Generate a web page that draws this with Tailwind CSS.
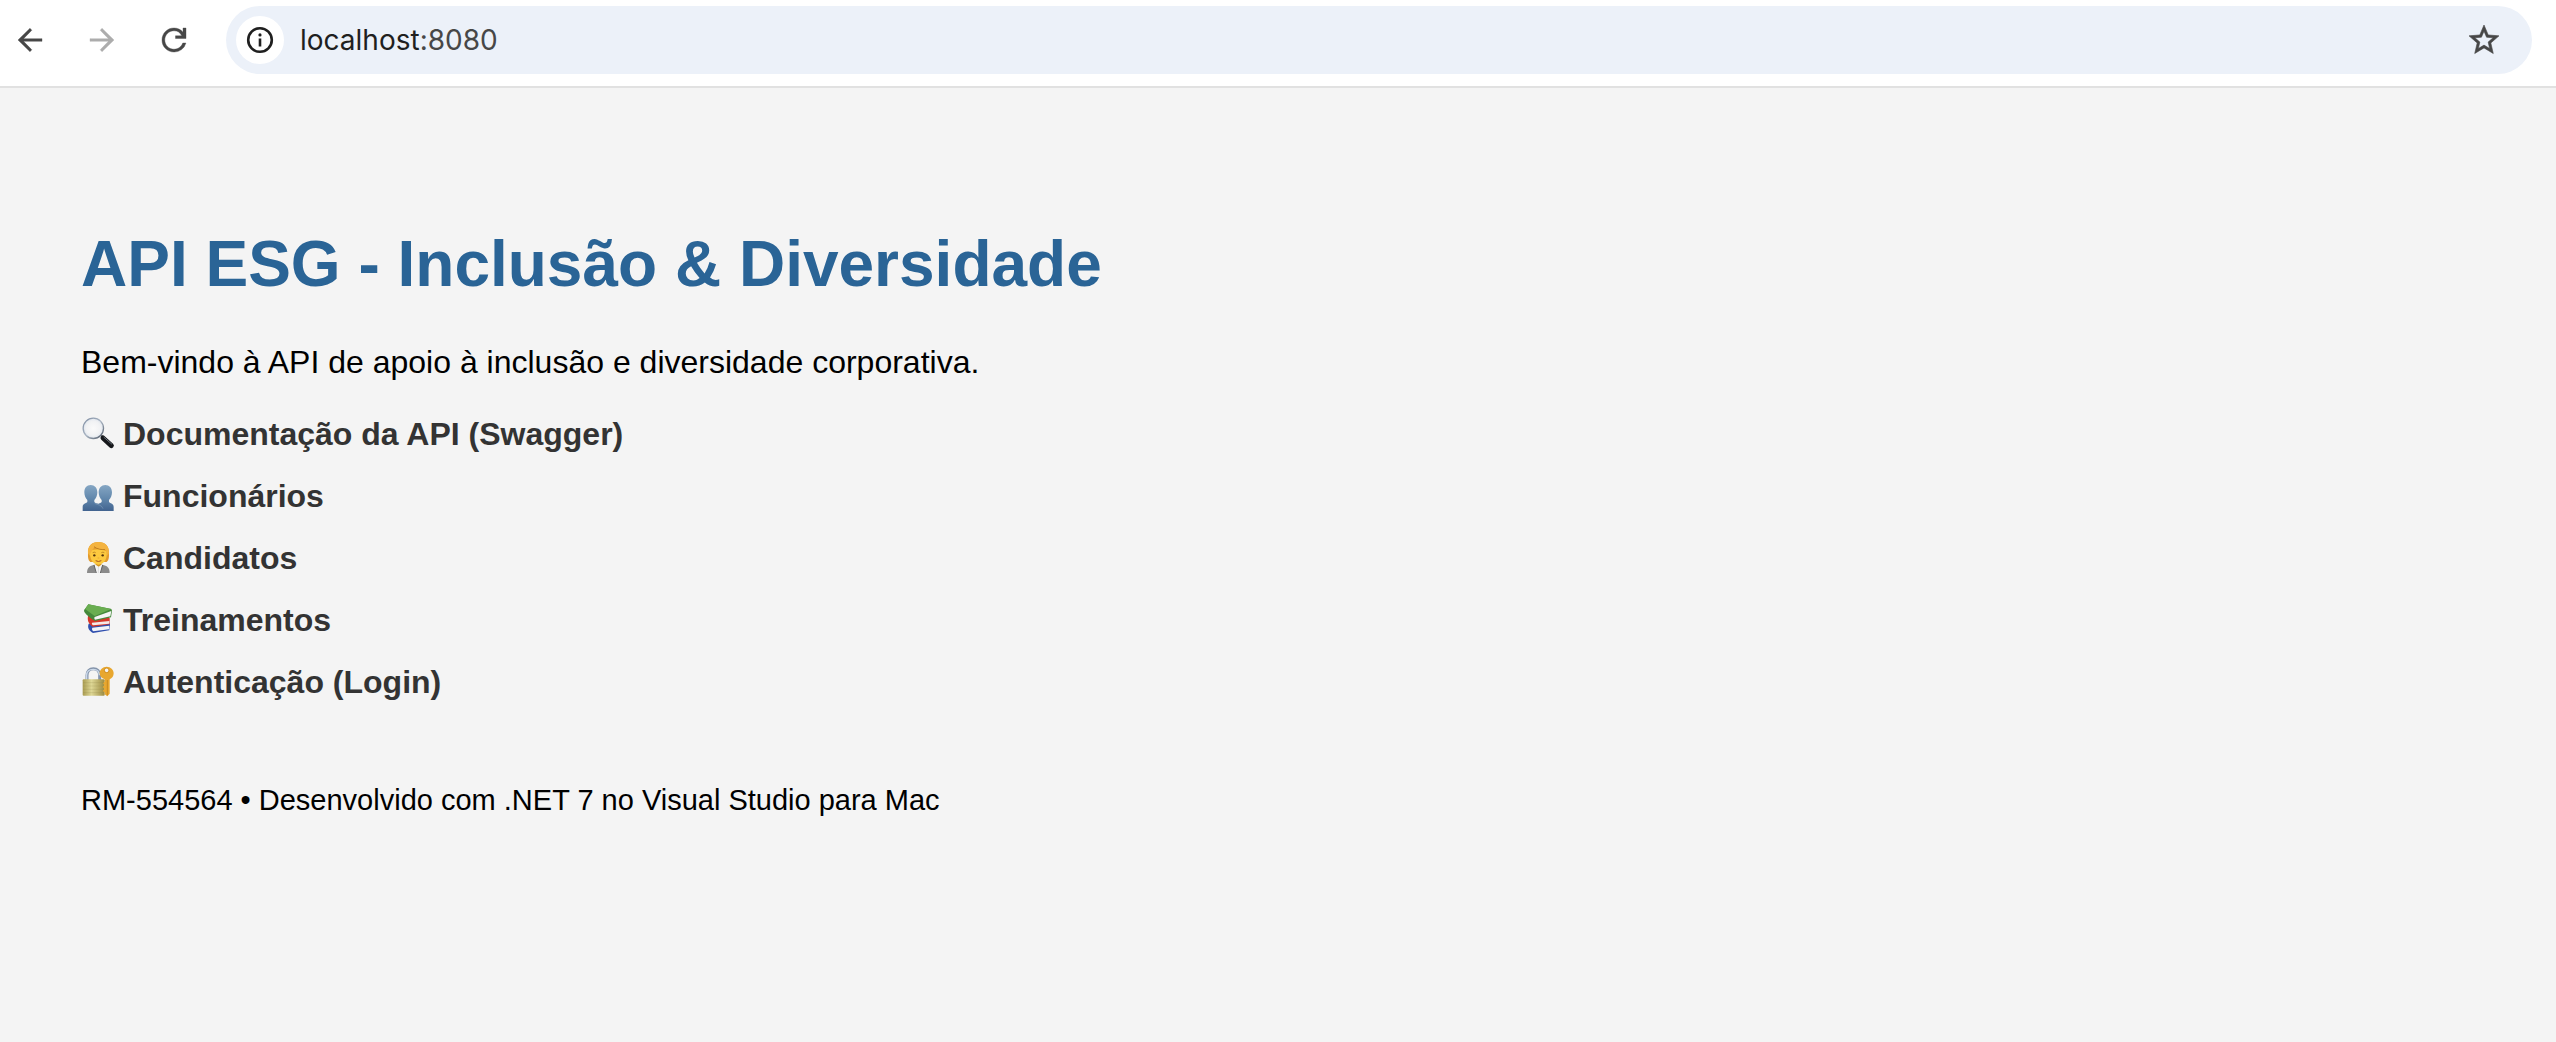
<!DOCTYPE html>
<html lang="pt-BR">
<head>
<meta charset="utf-8">
<title>API ESG - Inclusão &amp; Diversidade</title>
<script src="https://cdn.jsdelivr.net/npm/@tailwindcss/browser@4"></script>
</head>
<body class="flex min-h-screen flex-col bg-[#f4f4f4] font-['Liberation_Sans',Arial,sans-serif] text-black">
<header class="flex items-start border-b-2 border-[#e1e1e1] bg-white pt-[6px] pr-6 pb-3 pl-3">
  <nav class="flex h-[68px] items-center gap-9 pr-[34px]" aria-label="Navegação">
    <button type="button" aria-label="Voltar" class="size-9 text-[#474747]"><svg viewBox="0 0 24 24" class="size-9" fill="currentColor" stroke="currentColor" stroke-width=".25"><path d="M20 11.1H7.700l5.500-5.600L12 4.200 4 12l8 7.800 1.200-1.300-5.500-5.600H20z"/></svg></button>
    <button type="button" aria-label="Avançar" class="size-9 text-[#acacac]"><svg viewBox="0 0 24 24" class="size-9" fill="currentColor" stroke="currentColor" stroke-width=".25"><path d="M4 11.100h12.300l-5.500-5.600L12 4.200l8 7.800-8 7.800-1.200-1.300 5.500-5.600H4z"/></svg></button>
    <button type="button" aria-label="Recarregar" class="size-9 text-[#474747]"><svg viewBox="0 0 24 24" class="size-9" fill="currentColor" stroke="currentColor" stroke-width=".25"><path d="M12 20c-2.230 0-4.130-.77-5.680-2.320S4 14.230 4 12s.77-4.130 2.320-5.680S9.770 4 12 4c1.150 0 2.250.24 3.300.71s1.950 1.160 2.700 2.040V4h2v7h-7V9.200h4.200A5.960 5.960 0 0 0 12 5.850c-3.400 0-6.150 2.750-6.150 6.150S8.600 18.150 12 18.150c2.700 0 5-1.750 5.850-4.150h2.100A7.900 7.900 0 0 1 12 20z"/></svg></button>
  </nav>
  <form class="flex h-[68px] grow items-center rounded-full bg-[#ecf1f9] pr-[30px] pl-[10px]">
    <button type="button" aria-label="Informações do site" class="grid size-12 place-items-center rounded-full bg-white text-[#1f1f1f]">
      <svg viewBox="0 0 28 28" class="size-7"><circle cx="14" cy="14" r="11.800" fill="none" stroke="currentColor" stroke-width="2.600"/><path d="M12.700 12.500h2.600v8h-2.600z" fill="currentColor"/><circle cx="14" cy="8.900" r="1.600" fill="currentColor"/></svg>
    </button>
    <div class="grow pl-4 font-[Inter,Roboto,sans-serif] text-[28px] leading-9 text-[#1f1f1f]" role="textbox" aria-label="Endereço" contenteditable="true" spellcheck="false">localhost<span class="text-[#474747]">:8080</span></div>
    <button type="button" aria-label="Adicionar aos favoritos" class="size-9 text-[#474747]"><svg viewBox="0 0 24 24" class="size-9" fill="currentColor" stroke="currentColor" stroke-width=".4"><path d="M22 9.240l-7.190-.62L12 2 9.190 8.630 2 9.240l5.460 4.730L5.820 21 12 17.270 18.180 21l-1.630-7.030L22 9.240zM12 15.400l-3.760 2.270 1-4.280-3.320-2.880 4.380-.38L12 6.100l1.710 4.040 4.380.38-3.320 2.880 1 4.280L12 15.400z"/></svg></button>
  </form>
</header>
<main class="px-[81px] pt-[140px] text-[32px] leading-9">
  <h1 class="text-[64px] leading-[72px] font-bold text-[#2a6496]">API ESG - Inclusão &amp; Diversidade</h1>
  <p class="mt-11">Bem-vindo à API de apoio à inclusão e diversidade corporativa.</p>
  <ul class="mt-9 flex flex-col gap-[26px] font-bold text-[#333333]">
    <li><a href="#swagger" class="flex w-fit gap-[6px]">
      <svg viewBox="33 18 108 108" class="size-9" aria-hidden="true">
        <defs><linearGradient id="rim" x1="0" y1="0" x2="1" y2="1"><stop offset="0" stop-color="#7e8da3"/><stop offset=".5" stop-color="#a9b4c2"/><stop offset="1" stop-color="#4e5866"/></linearGradient><radialGradient id="lens"><stop offset="0" stop-color="#fafafa"/><stop offset=".7" stop-color="#f1f2f4"/><stop offset="1" stop-color="#dfe5ed"/></radialGradient></defs>
        <path d="M91 74l9 9" stroke="#6b7078" stroke-width="6"/>
        <path d="M99 84l25 23" stroke="#15171a" stroke-width="15" stroke-linecap="round"/>
        <path d="M102 82l23 20" stroke="#68717a" stroke-width="3" stroke-linecap="round"/>
        <circle cx="70" cy="55" r="30.500" fill="url(#lens)" stroke="url(#rim)" stroke-width="4"/>
      </svg>Documentação da API (Swagger)</a></li>
    <li><a href="#funcionarios" class="flex w-fit gap-[6px]">
      <svg viewBox="33 24 108 108" class="size-9" aria-hidden="true">
        <defs><linearGradient id="bust" x1="0" y1="44" x2="0" y2="123" gradientUnits="userSpaceOnUse"><stop offset="0" stop-color="#86a7c4"/><stop offset=".55" stop-color="#6086ab"/><stop offset="1" stop-color="#41638f"/></linearGradient></defs>
        <g fill="url(#bust)"><path d="M106 45c12 0 20 9 20 22 0 10-4 18-9 23v6c4 5 14 4 14 15v12H80v-12c0-11 11-10 15-15v-6c-5-5-9-13-9-23 0-13 8-22 20-22z"/><path d="M62 45c12 0 20 9 20 22 0 10-4 18-9 23v6c5 6 24 4 26 19v8H38v-12c0-11 10-10 14-15v-6c-5-5-9-13-9-23 0-13 7-22 19-22z"/></g>
        <path d="M74 100c10 5 22 5 25 16" fill="none" stroke="#8fa8c4" stroke-width="1.500"/>
      </svg>Funcionários</a></li>
    <li><a href="#candidatos" class="flex w-fit gap-[6px]">
      <svg viewBox="33 18 108 108" class="size-9" aria-hidden="true">
        <path d="M51 117c0-17 8-22 22-25h24c14 3 22 8 22 25z" fill="#8b8b8b"/>
        <path d="M73 92h24l-5 25H78z" fill="#f5f5f5"/><path d="M77 82h17v10l-8 6-9-6z" fill="#d9951d"/>
        <path d="M72 93l7 24M98 93l-7 24" stroke="#626262" stroke-width="3"/><path d="M85 98v19" stroke="#cfcfcf" stroke-width="2"/>
        <path d="M54 55c0-20 11-31 31-31s32 11 32 31c0 12 1 23-7 29H61c-8-6-7-17-7-29z" fill="#e39b2c"/>
        <path d="M60 52c7-8 40-8 50 0 3 22-8 40-25 40S58 74 60 52z" fill="#fcc93f"/>
        <path d="M54 58c-2-22 12-34 31-34 21 0 33 13 32 34l-5 7c0-9-2-15-8-19-15 0-25-2-31-7-3 8-10 11-14 26z" fill="#f4b33f"/>
        <path d="M72 38c10 8 22 9 33 9" fill="none" stroke="#a96a16" stroke-width="2"/>
        <circle cx="73" cy="64" r="3.500" fill="#52340f"/><circle cx="98" cy="64" r="3.500" fill="#52340f"/>
        <path d="M68 56q5-3 9 0M94 56q5-3 9 0" fill="none" stroke="#a66c19" stroke-width="2"/>
        <path d="M77 80q8 5 17 0" fill="none" stroke="#a6511e" stroke-width="3"/><path d="M83 72h5" stroke="#e09a27" stroke-width="2"/>
      </svg>Candidatos</a></li>
    <li><a href="#treinamentos" class="flex w-fit gap-[6px]">
      <svg viewBox="33 21 108 108" class="size-9" aria-hidden="true">
        <path d="M56 86l62-3 2 6-2 17-49 8C58 108 51 98 56 86z" fill="#2f4fae"/>
        <path d="M67 98l51-6v11l-48 6c-4-3-5-7-3-11z" fill="#f1f3f8"/>
        <path d="M55 60l58 2 6 8v18l-51 7C56 88 50 74 55 60z" fill="#d6372a"/>
        <path d="M66 83l52-5v8l-49 5c-3-2-4-5-3-8z" fill="#f6e9e7"/>
        <path d="M55 28l69 14 2 5-3 20-48 11C62 71 50 61 43 51c-2-5 0-8 2-9z" fill="#45893b"/>
        <path d="M74 66l50-18-3 16-46 10c-2-3-3-5-1-8z" fill="#f5f5f5"/>
        <path d="M55 28l69 14-50 21-29-21z" fill="#69ad50"/>
      </svg>Treinamentos</a></li>
    <li><a href="#login" class="flex w-fit gap-[6px]">
      <svg viewBox="33 27 108 108" class="size-9" aria-hidden="true">
        <defs><linearGradient id="body"><stop offset="0" stop-color="#a99b50"/><stop offset=".4" stop-color="#ded795"/><stop offset="1" stop-color="#9c8b41"/></linearGradient></defs>
        <path d="M51 76V61c0-12 7-20 19-20s19 8 19 20v15" fill="none" stroke="#8494ab" stroke-width="9"/><path d="M50 75V61c0-11 8-18 20-18s18 7 18 18" fill="none" stroke="#cbd9ea" stroke-width="4"/>
        <rect x="38" y="73" width="66" height="49" rx="3" fill="url(#body)"/><path d="M39 83h64M39 93h64M39 103h64M39 113h64" stroke="#8b8144" stroke-opacity=".3" stroke-width="2"/>
        <path fill-rule="evenodd" d="M110 35c12 0 21 9 21 20 0 9-5 15-12 18v43l-7 8-8-6v-6l-6-4 6-7-6-5 6-6-5-5 5-5v-7c-9-3-15-9-15-18 0-11 9-20 21-20zm0 5a6 6 0 1 0 0 12 6 6 0 0 0 0-12z" fill="#e8a72f"/><path d="M112 75v46" stroke="#b87a18" stroke-width="2"/><circle cx="110" cy="46" r="7" fill="none" stroke="#c58720" stroke-width="2"/>
      </svg>Autenticação (Login)</a></li>
  </ul>
  <footer class="mt-[84px] text-[29px] leading-8">RM-554564 • Desenvolvido com .NET 7 no Visual Studio para Mac</footer>
</main>
</body>
</html>
